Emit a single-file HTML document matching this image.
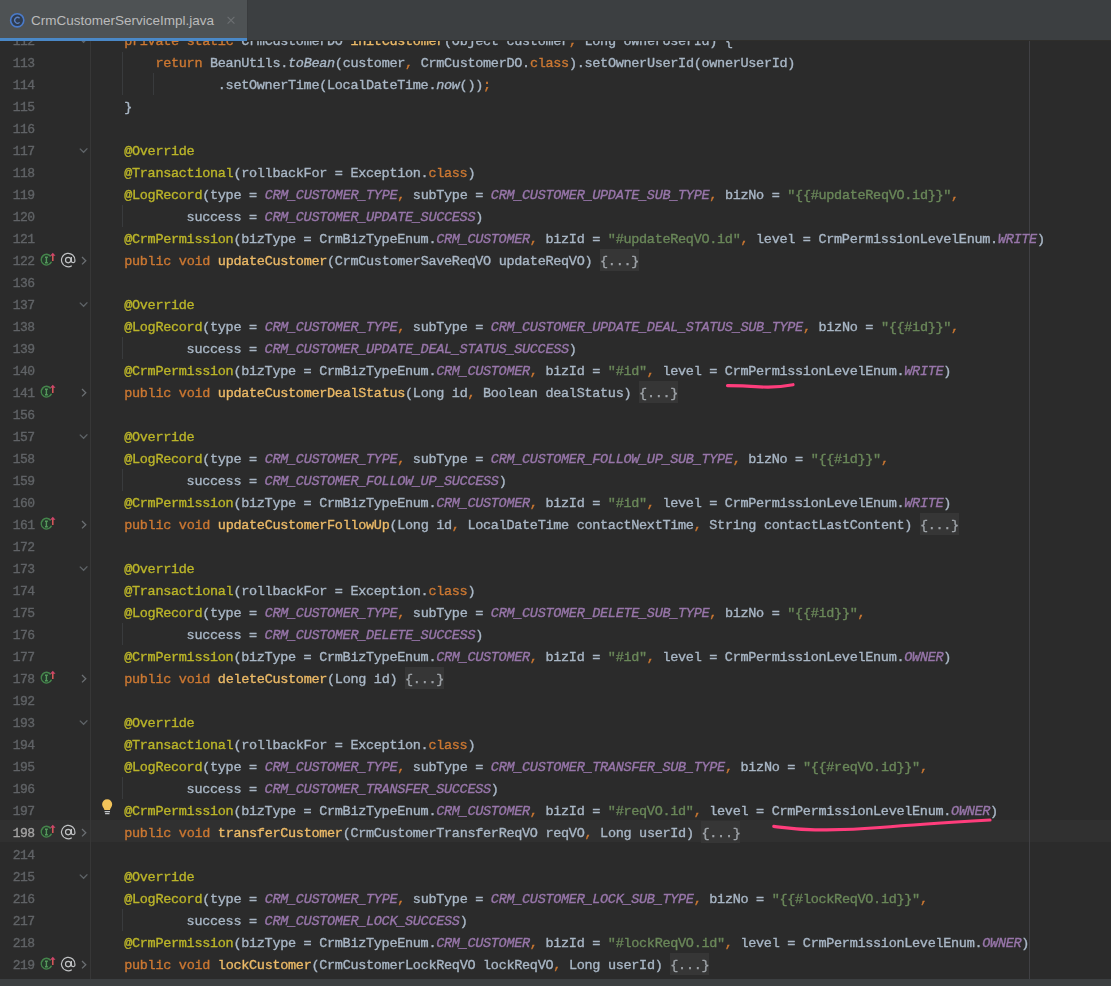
<!DOCTYPE html>
<html><head><meta charset="utf-8"><style>
*{margin:0;padding:0;box-sizing:border-box}
html,body{width:1111px;height:986px;overflow:hidden;background:#2b2b2b}
body{position:relative;font-family:"Liberation Mono",monospace}
.r{position:absolute;left:93px;height:22px;line-height:22px;font-size:13.5px;letter-spacing:-0.3013px;white-space:pre;color:#a9b7c6;-webkit-text-stroke:0.35px currentColor}
.ln{position:absolute;left:0;width:35px;text-align:right;height:22px;line-height:22px;font-size:13px;letter-spacing:-0.5px;width:34.6px;color:#606366;white-space:pre;-webkit-text-stroke:0.35px currentColor}
.ln.cur{color:#a4a3a3}
i{font-style:normal}
.k{color:#cc7832}
.a{color:#bbb529}
.s{color:#6a8759}
.c{color:#9876aa;font-style:italic}
.it{font-style:italic}
.m{color:#ecba67}
.f{color:#9ea3a8}
.fb{position:absolute;height:22px;background:#363636}
.txt{position:absolute;left:0;top:3px;width:1111px;height:986px;transform:translateZ(0)}
#tabbar{position:absolute;left:0;top:0;width:1111px;height:40px;background:#3c3f41;z-index:5}
#tab{position:absolute;left:0;top:0;width:247px;height:41px;background:#4e5254;z-index:6}
#tabline{position:absolute;left:0;top:38px;width:247px;height:3px;background:#4a88c7;z-index:7}
#tabtxt{position:absolute;left:31px;top:11px;height:20px;line-height:20px;font-family:"Liberation Sans",sans-serif;font-size:13.5px;color:#bbbbbb;z-index:7;white-space:pre}
#bottom{position:absolute;left:0;top:979px;width:1111px;height:7px;background:#3c3f41;z-index:5}
.vl{position:absolute;width:1px}
</style></head>
<body>
<div class="vl" style="left:0;top:820px;width:1111px;height:22px;background:#303030"></div>
<div class="vl" style="left:0;top:40px;width:1111px;height:1px;background:#2f2e2b;z-index:4"></div>
<div class="vl" style="left:90px;top:0;height:986px;background:#373737"></div>
<div class="vl" style="left:1029px;top:0;height:986px;background:#404044"></div>
<div class="vl" style="left:122px;top:52px;height:43px;background:#393b3d"></div><div class="vl" style="left:153px;top:73px;height:22px;background:#393b3d"></div><div class="vl" style="left:122px;top:205px;height:22px;background:#393b3d"></div><div class="vl" style="left:122px;top:337px;height:22px;background:#393b3d"></div><div class="vl" style="left:122px;top:469px;height:22px;background:#393b3d"></div><div class="vl" style="left:122px;top:623px;height:22px;background:#393b3d"></div><div class="vl" style="left:122px;top:777px;height:22px;background:#393b3d"></div><div class="vl" style="left:122px;top:909px;height:22px;background:#393b3d"></div>
<div class="fb" style="left:600.0px;top:249px;width:39px"></div><div class="fb" style="left:639.0px;top:381px;width:39px"></div><div class="fb" style="left:919.8px;top:513px;width:39px"></div><div class="fb" style="left:405.0px;top:667px;width:39px"></div><div class="fb" style="left:701.4px;top:821px;width:39px"></div><div class="fb" style="left:670.2px;top:953px;width:39px"></div>
<div class="txt">
<div class="r" style="top:28px">    <i class="k">private</i> <i class="k">static</i> CrmCustomerDO <i class="m">initCustomer</i>(Object customer<i class="k">,</i> Long ownerUserId) {</div><div class="r" style="top:50px">        <i class="k">return</i> BeanUtils.<i class="it">toBean</i>(customer<i class="k">,</i> CrmCustomerDO.<i class="k">class</i>).setOwnerUserId(ownerUserId)</div><div class="r" style="top:72px">                .setOwnerTime(LocalDateTime.<i class="it">now</i>())<i class="k">;</i></div><div class="r" style="top:94px">    }</div><div class="r" style="top:116px"></div><div class="r" style="top:138px">    <i class="a">@Override</i></div><div class="r" style="top:160px">    <i class="a">@Transactional</i>(rollbackFor = Exception.<i class="k">class</i>)</div><div class="r" style="top:182px">    <i class="a">@LogRecord</i>(type = <i class="c">CRM_CUSTOMER_TYPE</i><i class="k">,</i> subType = <i class="c">CRM_CUSTOMER_UPDATE_SUB_TYPE</i><i class="k">,</i> bizNo = <i class="s">&quot;{{#updateReqVO.id}}&quot;</i><i class="k">,</i></div><div class="r" style="top:204px">            success = <i class="c">CRM_CUSTOMER_UPDATE_SUCCESS</i>)</div><div class="r" style="top:226px">    <i class="a">@CrmPermission</i>(bizType = CrmBizTypeEnum.<i class="c">CRM_CUSTOMER</i><i class="k">,</i> bizId = <i class="s">&quot;#updateReqVO.id&quot;</i><i class="k">,</i> level = CrmPermissionLevelEnum.<i class="c">WRITE</i>)</div><div class="r" style="top:248px">    <i class="k">public</i> <i class="k">void</i> <i class="m">updateCustomer</i>(CrmCustomerSaveReqVO updateReqVO) <i class="f">{...}</i></div><div class="r" style="top:270px"></div><div class="r" style="top:292px">    <i class="a">@Override</i></div><div class="r" style="top:314px">    <i class="a">@LogRecord</i>(type = <i class="c">CRM_CUSTOMER_TYPE</i><i class="k">,</i> subType = <i class="c">CRM_CUSTOMER_UPDATE_DEAL_STATUS_SUB_TYPE</i><i class="k">,</i> bizNo = <i class="s">&quot;{{#id}}&quot;</i><i class="k">,</i></div><div class="r" style="top:336px">            success = <i class="c">CRM_CUSTOMER_UPDATE_DEAL_STATUS_SUCCESS</i>)</div><div class="r" style="top:358px">    <i class="a">@CrmPermission</i>(bizType = CrmBizTypeEnum.<i class="c">CRM_CUSTOMER</i><i class="k">,</i> bizId = <i class="s">&quot;#id&quot;</i><i class="k">,</i> level = CrmPermissionLevelEnum.<i class="c">WRITE</i>)</div><div class="r" style="top:380px">    <i class="k">public</i> <i class="k">void</i> <i class="m">updateCustomerDealStatus</i>(Long id<i class="k">,</i> Boolean dealStatus) <i class="f">{...}</i></div><div class="r" style="top:402px"></div><div class="r" style="top:424px">    <i class="a">@Override</i></div><div class="r" style="top:446px">    <i class="a">@LogRecord</i>(type = <i class="c">CRM_CUSTOMER_TYPE</i><i class="k">,</i> subType = <i class="c">CRM_CUSTOMER_FOLLOW_UP_SUB_TYPE</i><i class="k">,</i> bizNo = <i class="s">&quot;{{#id}}&quot;</i><i class="k">,</i></div><div class="r" style="top:468px">            success = <i class="c">CRM_CUSTOMER_FOLLOW_UP_SUCCESS</i>)</div><div class="r" style="top:490px">    <i class="a">@CrmPermission</i>(bizType = CrmBizTypeEnum.<i class="c">CRM_CUSTOMER</i><i class="k">,</i> bizId = <i class="s">&quot;#id&quot;</i><i class="k">,</i> level = CrmPermissionLevelEnum.<i class="c">WRITE</i>)</div><div class="r" style="top:512px">    <i class="k">public</i> <i class="k">void</i> <i class="m">updateCustomerFollowUp</i>(Long id<i class="k">,</i> LocalDateTime contactNextTime<i class="k">,</i> String contactLastContent) <i class="f">{...}</i></div><div class="r" style="top:534px"></div><div class="r" style="top:556px">    <i class="a">@Override</i></div><div class="r" style="top:578px">    <i class="a">@Transactional</i>(rollbackFor = Exception.<i class="k">class</i>)</div><div class="r" style="top:600px">    <i class="a">@LogRecord</i>(type = <i class="c">CRM_CUSTOMER_TYPE</i><i class="k">,</i> subType = <i class="c">CRM_CUSTOMER_DELETE_SUB_TYPE</i><i class="k">,</i> bizNo = <i class="s">&quot;{{#id}}&quot;</i><i class="k">,</i></div><div class="r" style="top:622px">            success = <i class="c">CRM_CUSTOMER_DELETE_SUCCESS</i>)</div><div class="r" style="top:644px">    <i class="a">@CrmPermission</i>(bizType = CrmBizTypeEnum.<i class="c">CRM_CUSTOMER</i><i class="k">,</i> bizId = <i class="s">&quot;#id&quot;</i><i class="k">,</i> level = CrmPermissionLevelEnum.<i class="c">OWNER</i>)</div><div class="r" style="top:666px">    <i class="k">public</i> <i class="k">void</i> <i class="m">deleteCustomer</i>(Long id) <i class="f">{...}</i></div><div class="r" style="top:688px"></div><div class="r" style="top:710px">    <i class="a">@Override</i></div><div class="r" style="top:732px">    <i class="a">@Transactional</i>(rollbackFor = Exception.<i class="k">class</i>)</div><div class="r" style="top:754px">    <i class="a">@LogRecord</i>(type = <i class="c">CRM_CUSTOMER_TYPE</i><i class="k">,</i> subType = <i class="c">CRM_CUSTOMER_TRANSFER_SUB_TYPE</i><i class="k">,</i> bizNo = <i class="s">&quot;{{#reqVO.id}}&quot;</i><i class="k">,</i></div><div class="r" style="top:776px">            success = <i class="c">CRM_CUSTOMER_TRANSFER_SUCCESS</i>)</div><div class="r" style="top:798px">    <i class="a">@CrmPermission</i>(bizType = CrmBizTypeEnum.<i class="c">CRM_CUSTOMER</i><i class="k">,</i> bizId = <i class="s">&quot;#reqVO.id&quot;</i><i class="k">,</i> level = CrmPermissionLevelEnum.<i class="c">OWNER</i>)</div><div class="r" style="top:820px">    <i class="k">public</i> <i class="k">void</i> <i class="m">transferCustomer</i>(CrmCustomerTransferReqVO reqVO<i class="k">,</i> Long userId) <i class="f">{...}</i></div><div class="r" style="top:842px"></div><div class="r" style="top:864px">    <i class="a">@Override</i></div><div class="r" style="top:886px">    <i class="a">@LogRecord</i>(type = <i class="c">CRM_CUSTOMER_TYPE</i><i class="k">,</i> subType = <i class="c">CRM_CUSTOMER_LOCK_SUB_TYPE</i><i class="k">,</i> bizNo = <i class="s">&quot;{{#lockReqVO.id}}&quot;</i><i class="k">,</i></div><div class="r" style="top:908px">            success = <i class="c">CRM_CUSTOMER_LOCK_SUCCESS</i>)</div><div class="r" style="top:930px">    <i class="a">@CrmPermission</i>(bizType = CrmBizTypeEnum.<i class="c">CRM_CUSTOMER</i><i class="k">,</i> bizId = <i class="s">&quot;#lockReqVO.id&quot;</i><i class="k">,</i> level = CrmPermissionLevelEnum.<i class="c">OWNER</i>)</div><div class="r" style="top:952px">    <i class="k">public</i> <i class="k">void</i> <i class="m">lockCustomer</i>(CrmCustomerLockReqVO lockReqVO<i class="k">,</i> Long userId) <i class="f">{...}</i></div>
<div class="ln" style="top:28px">112</div><div class="ln" style="top:50px">113</div><div class="ln" style="top:72px">114</div><div class="ln" style="top:94px">115</div><div class="ln" style="top:116px">116</div><div class="ln" style="top:138px">117</div><div class="ln" style="top:160px">118</div><div class="ln" style="top:182px">119</div><div class="ln" style="top:204px">120</div><div class="ln" style="top:226px">121</div><div class="ln" style="top:248px">122</div><div class="ln" style="top:270px">136</div><div class="ln" style="top:292px">137</div><div class="ln" style="top:314px">138</div><div class="ln" style="top:336px">139</div><div class="ln" style="top:358px">140</div><div class="ln" style="top:380px">141</div><div class="ln" style="top:402px">156</div><div class="ln" style="top:424px">157</div><div class="ln" style="top:446px">158</div><div class="ln" style="top:468px">159</div><div class="ln" style="top:490px">160</div><div class="ln" style="top:512px">161</div><div class="ln" style="top:534px">172</div><div class="ln" style="top:556px">173</div><div class="ln" style="top:578px">174</div><div class="ln" style="top:600px">175</div><div class="ln" style="top:622px">176</div><div class="ln" style="top:644px">177</div><div class="ln" style="top:666px">178</div><div class="ln" style="top:688px">192</div><div class="ln" style="top:710px">193</div><div class="ln" style="top:732px">194</div><div class="ln" style="top:754px">195</div><div class="ln" style="top:776px">196</div><div class="ln" style="top:798px">197</div><div class="ln cur" style="top:820px">198</div><div class="ln" style="top:842px">214</div><div class="ln" style="top:864px">215</div><div class="ln" style="top:886px">216</div><div class="ln" style="top:908px">217</div><div class="ln" style="top:930px">218</div><div class="ln" style="top:952px">219</div>
</div>
<svg style="position:absolute;left:0;top:0;z-index:3" width="1111" height="986">
<path d="M 79.8 38.6 L 83.6 42.3 L 87.4 38.4" fill="none" stroke="#5f6468" stroke-width="1.3"/><path d="M 79.8 148.6 L 83.6 152.3 L 87.4 148.4" fill="none" stroke="#5f6468" stroke-width="1.3"/><path d="M 79.8 302.6 L 83.6 306.3 L 87.4 302.4" fill="none" stroke="#5f6468" stroke-width="1.3"/><path d="M 79.8 434.6 L 83.6 438.3 L 87.4 434.4" fill="none" stroke="#5f6468" stroke-width="1.3"/><path d="M 79.8 566.6 L 83.6 570.3 L 87.4 566.4" fill="none" stroke="#5f6468" stroke-width="1.3"/><path d="M 79.8 720.6 L 83.6 724.3 L 87.4 720.4" fill="none" stroke="#5f6468" stroke-width="1.3"/><path d="M 79.8 874.6 L 83.6 878.3 L 87.4 874.4" fill="none" stroke="#5f6468" stroke-width="1.3"/><g>
<path d="M 50.70 256.40 A 5.2 5.2 0 1 0 51.40 261.60" fill="none" stroke="#44844b" stroke-width="1.7"/>
<circle cx="46.4" cy="260" r="4.4" fill="#24382a"/>
<path d="M 45.0 257.2 h2.8 M 46.4 257.2 v5.6 M 45.0 262.8 h2.8" stroke="#55995c" stroke-width="1.4" fill="none"/>
<path d="M 52.8 254 v7" stroke="#db5b5b" stroke-width="1.5"/>
<path d="M 50.1 255.8 L 52.8 252.7 L 55.5 255.8 Z" fill="#d0456a"/>
</g><path d="M 82 257 L 85.8 260.7 L 82 264.4" fill="none" stroke="#6b6f73" stroke-width="1.3"/><g>
<path d="M 50.70 388.40 A 5.2 5.2 0 1 0 51.40 393.60" fill="none" stroke="#44844b" stroke-width="1.7"/>
<circle cx="46.4" cy="392" r="4.4" fill="#24382a"/>
<path d="M 45.0 389.2 h2.8 M 46.4 389.2 v5.6 M 45.0 394.8 h2.8" stroke="#55995c" stroke-width="1.4" fill="none"/>
<path d="M 52.8 386 v7" stroke="#db5b5b" stroke-width="1.5"/>
<path d="M 50.1 387.8 L 52.8 384.7 L 55.5 387.8 Z" fill="#d0456a"/>
</g><path d="M 82 389 L 85.8 392.7 L 82 396.4" fill="none" stroke="#6b6f73" stroke-width="1.3"/><g>
<path d="M 50.70 520.40 A 5.2 5.2 0 1 0 51.40 525.60" fill="none" stroke="#44844b" stroke-width="1.7"/>
<circle cx="46.4" cy="524" r="4.4" fill="#24382a"/>
<path d="M 45.0 521.2 h2.8 M 46.4 521.2 v5.6 M 45.0 526.8 h2.8" stroke="#55995c" stroke-width="1.4" fill="none"/>
<path d="M 52.8 518 v7" stroke="#db5b5b" stroke-width="1.5"/>
<path d="M 50.1 519.8 L 52.8 516.7 L 55.5 519.8 Z" fill="#d0456a"/>
</g><path d="M 82 521 L 85.8 524.7 L 82 528.4" fill="none" stroke="#6b6f73" stroke-width="1.3"/><g>
<path d="M 50.70 674.40 A 5.2 5.2 0 1 0 51.40 679.60" fill="none" stroke="#44844b" stroke-width="1.7"/>
<circle cx="46.4" cy="678" r="4.4" fill="#24382a"/>
<path d="M 45.0 675.2 h2.8 M 46.4 675.2 v5.6 M 45.0 680.8 h2.8" stroke="#55995c" stroke-width="1.4" fill="none"/>
<path d="M 52.8 672 v7" stroke="#db5b5b" stroke-width="1.5"/>
<path d="M 50.1 673.8 L 52.8 670.7 L 55.5 673.8 Z" fill="#d0456a"/>
</g><path d="M 82 675 L 85.8 678.7 L 82 682.4" fill="none" stroke="#6b6f73" stroke-width="1.3"/><g>
<path d="M 50.70 828.40 A 5.2 5.2 0 1 0 51.40 833.60" fill="none" stroke="#44844b" stroke-width="1.7"/>
<circle cx="46.4" cy="832" r="4.4" fill="#24382a"/>
<path d="M 45.0 829.2 h2.8 M 46.4 829.2 v5.6 M 45.0 834.8 h2.8" stroke="#55995c" stroke-width="1.4" fill="none"/>
<path d="M 52.8 826 v7" stroke="#db5b5b" stroke-width="1.5"/>
<path d="M 50.1 827.8 L 52.8 824.7 L 55.5 827.8 Z" fill="#d0456a"/>
</g><path d="M 82 829 L 85.8 832.7 L 82 836.4" fill="none" stroke="#6b6f73" stroke-width="1.3"/><g>
<path d="M 50.70 960.40 A 5.2 5.2 0 1 0 51.40 965.60" fill="none" stroke="#44844b" stroke-width="1.7"/>
<circle cx="46.4" cy="964" r="4.4" fill="#24382a"/>
<path d="M 45.0 961.2 h2.8 M 46.4 961.2 v5.6 M 45.0 966.8 h2.8" stroke="#55995c" stroke-width="1.4" fill="none"/>
<path d="M 52.8 958 v7" stroke="#db5b5b" stroke-width="1.5"/>
<path d="M 50.1 959.8 L 52.8 956.7 L 55.5 959.8 Z" fill="#d0456a"/>
</g><path d="M 82 961 L 85.8 964.7 L 82 968.4" fill="none" stroke="#6b6f73" stroke-width="1.3"/><g fill="none" stroke="#c0c2c4" stroke-width="1.2">
<path d="M 71.80 265.70 A 6.7 6.7 0 1 1 74.90 260.30 v0.6 a 1.75 1.75 0 0 1 -3.5 0 v-3.8"/>
<circle cx="68.2" cy="260.1" r="2.7"/>
</g><g fill="none" stroke="#c0c2c4" stroke-width="1.2">
<path d="M 71.80 837.70 A 6.7 6.7 0 1 1 74.90 832.30 v0.6 a 1.75 1.75 0 0 1 -3.5 0 v-3.8"/>
<circle cx="68.2" cy="832.1" r="2.7"/>
</g><g fill="none" stroke="#c0c2c4" stroke-width="1.2">
<path d="M 71.80 969.70 A 6.7 6.7 0 1 1 74.90 964.30 v0.6 a 1.75 1.75 0 0 1 -3.5 0 v-3.8"/>
<circle cx="68.2" cy="964.1" r="2.7"/>
</g><g>
<path d="M 104.4 809.9 C 104.3 808.2 102.1 806.9 102.1 804.2 A 5.05 5.05 0 0 1 112.2 804.2 C 112.2 806.9 110.1 808.2 110.0 809.9 Z" fill="#f2c35a"/>
<path d="M 104.6 811.6 h5.4 M 105.1 813.7 h4.4" stroke="#c3c6ca" stroke-width="1.3"/>
</g>
<g fill="none" stroke="#ff3d7c" stroke-width="3.2" stroke-linecap="round" stroke-linejoin="round">
<path d="M 727.5 385.6 C 740 385.6 750 386.2 760 386.9 C 772 387.6 782 386.9 793 384.7"/>
<path d="M 773.8 826.4 C 785 827.8 795 829.3 815 829.8 C 840 830.3 860 829.3 880 827.5 C 910 825 940 823 990 820"/>
</g>
</svg>
<div id="tabbar"></div>
<div id="tab"></div>
<div id="tabline"></div>
<svg style="position:absolute;left:0;top:0;z-index:8" width="260" height="41">
<circle cx="17.2" cy="20.3" r="6.6" fill="#2f3c50" stroke="#4a7bcb" stroke-width="1.6"/>
<path d="M 19.6 18.2 A 2.9 2.9 0 1 0 19.6 22.4" fill="none" stroke="#5c82c4" stroke-width="1.3"/>
<path d="M 247.5 0 V 38" stroke="#393b3d" stroke-width="1"/>
<path d="M 227.6 16.8 L 234.4 23.6 M 234.4 16.8 L 227.6 23.6" stroke="#6d7073" stroke-width="1.1"/>
</svg>
<div id="tabtxt">CrmCustomerServiceImpl.java</div>
<div id="bottom"></div>
</body></html>
